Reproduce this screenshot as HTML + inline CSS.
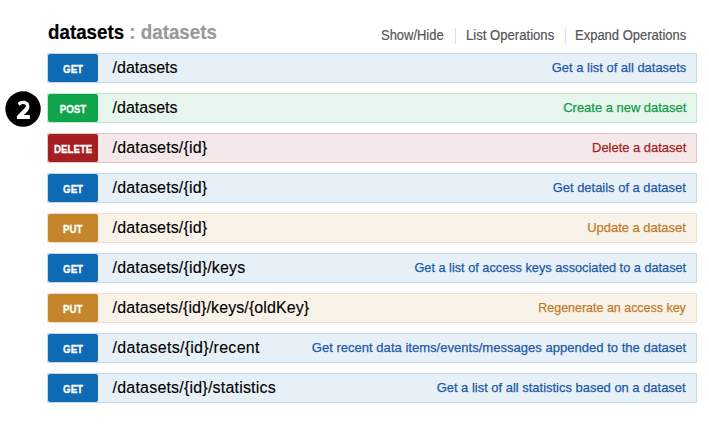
<!DOCTYPE html>
<html><head><meta charset="utf-8">
<style>
html,body{margin:0;padding:0;background:#fff;width:709px;height:425px;overflow:hidden;}
body{position:relative;font-family:"Liberation Sans",sans-serif;}
.t{position:absolute;white-space:nowrap;line-height:1;}
.title{left:48px;top:22px;font-size:20.5px;transform:scaleX(0.915);transform-origin:0 50%;font-weight:bold;color:#000;letter-spacing:0px;-webkit-text-stroke:0.2px currentColor;}
.title span{color:#999;margin-left:0px;}
.links{top:28px;font-size:14px;color:#555;transform-origin:0 50%;-webkit-text-stroke:0.2px #555;}
.sep{position:absolute;top:28px;width:1px;height:16px;background:#ddd;}
.row{position:absolute;left:47px;width:648px;height:28px;border:1px solid;}
.badge{position:absolute;left:0px;top:0px;width:50px;height:28px;border-radius:2px;color:#fff;font-size:11.75px;font-weight:bold;text-align:center;line-height:30px;}
.badge b{display:inline-block;transform:scaleX(0.825);font-weight:bold;-webkit-text-stroke:0.3px #fff;}
.path{position:absolute;left:64.6px;letter-spacing:0.15px;top:6px;font-size:16px;color:#000;-webkit-text-stroke:0.12px #000;line-height:1;white-space:nowrap;}
.sum{position:absolute;right:10px;top:7px;font-size:13.5px;transform:scaleX(0.959);transform-origin:100% 50%;-webkit-text-stroke:0.25px currentColor;line-height:1;white-space:nowrap;}
.get{background:#e7f0f7;border-color:#c3d9ec;}
.get .badge{background:#0f6ab4;} .get .sum{color:#1c59a6;}
.post{background:#e7f6ec;border-color:#c3e8d1;}
.post .badge{background:#10a54a;} .post .sum{color:#109c48;}
.del{background:#f5e8e8;border-color:#e8c6c7;}
.del .badge{background:#a41e22;} .del .sum{color:#a41e22;}
.put{background:#f9f2e9;border-color:#f0e0ca;}
.put .badge{background:#c5862b;} .put .sum{color:#bd7c2b;}
</style></head><body>
<div class="t title">datasets<span> : datasets</span></div>
<div class="t links" style="left:381px;transform:scaleX(0.925)">Show/Hide</div>
<div class="sep" style="left:455px"></div>
<div class="t links" style="left:466px;transform:scaleX(0.937)">List Operations</div>
<div class="sep" style="left:565px"></div>
<div class="t links" style="left:575px;transform:scaleX(0.928)">Expand Operations</div>

<svg style="position:absolute;left:0;top:0" width="50" height="135" viewBox="0 0 50 135"><circle cx="23.05" cy="109.05" r="17.7" fill="#000"/><path fill="#fff" d="M17.6 103.2C19.3 101.6 21.1 100.8 23.3 100.8C27 100.8 29.4 103 29.4 106.4C29.4 109.2 28 111 25.5 113.5L23.8 115.1L29.85 115.1L29.85 118.9L16.9 118.9L16.9 116L22.4 110.4C25 107.8 26 106.9 26 106.3C26 104.9 24.8 104.1 23.2 104.1C21.9 104.1 20.8 104.7 19.6 105.7Z"/></svg>

<div class="row get" style="top:53px"><div class="badge"><b>GET</b></div><div class="path" style="letter-spacing:0">/datasets</div><div class="sum">Get a list of all datasets</div></div>
<div class="row post" style="top:93px"><div class="badge"><b>POST</b></div><div class="path" style="letter-spacing:0">/datasets</div><div class="sum">Create a new dataset</div></div>
<div class="row del" style="top:133px"><div class="badge"><b>DELETE</b></div><div class="path">/datasets/{id}</div><div class="sum">Delete a dataset</div></div>
<div class="row get" style="top:173px"><div class="badge"><b>GET</b></div><div class="path">/datasets/{id}</div><div class="sum">Get details of a dataset</div></div>
<div class="row put" style="top:213px"><div class="badge"><b>PUT</b></div><div class="path">/datasets/{id}</div><div class="sum">Update a dataset</div></div>
<div class="row get" style="top:253px"><div class="badge"><b>GET</b></div><div class="path">/datasets/{id}/keys</div><div class="sum" style="transform:scaleX(0.943)">Get a list of access keys associated to a dataset</div></div>
<div class="row put" style="top:293px"><div class="badge"><b>PUT</b></div><div class="path" style="letter-spacing:0.1px">/datasets/{id}/keys/{oldKey}</div><div class="sum" style="transform:scaleX(0.923)">Regenerate an access key</div></div>
<div class="row get" style="top:333px"><div class="badge"><b>GET</b></div><div class="path" style="letter-spacing:0.27px">/datasets/{id}/recent</div><div class="sum" style="transform:scaleX(0.967)">Get recent data items/events/messages appended to the dataset</div></div>
<div class="row get" style="top:373px"><div class="badge"><b>GET</b></div><div class="path" style="letter-spacing:0.2px">/datasets/{id}/statistics</div><div class="sum">Get a list of all statistics based on a dataset</div></div>
</body></html>
